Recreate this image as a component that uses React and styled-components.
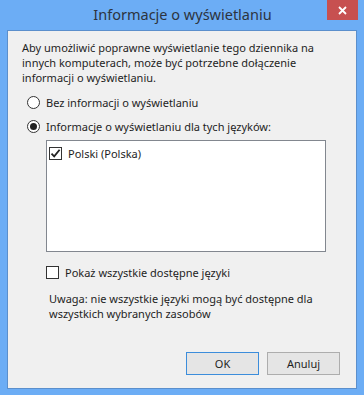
import styled, { createGlobalStyle } from "styled-components";

const GlobalStyle = createGlobalStyle`
  html, body {
    margin: 0;
    padding: 0;
    background: #6cadf5;
  }
  body {
    font-family: "Noto Sans", "Open Sans", sans-serif;
  }
`;

const CheckMark = () => (
  <svg width="11" height="11" viewBox="0 0 11 11">
    <path
      d="M1.5 5.6 L4.2 8.4 L9.6 1.8"
      fill="none"
      stroke="#222"
      strokeWidth="1.8"
    />
  </svg>
);

const App = () => {
  return (
    <>
      <GlobalStyle />
      <Window>
        <TitleBar>
          <span />
          <Title>Informacje o wyświetlaniu</Title>
          <CloseButton aria-label="Zamknij">
            <svg width="9" height="9" viewBox="0 0 9 9">
              <path d="M1 1 L8 8 M8 1 L1 8" stroke="#fff" strokeWidth="1.8" />
            </svg>
          </CloseButton>
        </TitleBar>

        <Client>
          <Intro>
            Aby umożliwić poprawne wyświetlanie tego dziennika na innych
            komputerach, może być potrzebne dołączenie informacji o
            wyświetlaniu.
          </Intro>

          <RadioRow $top={9}>
            <Radio />
            <Label>Bez informacji o wyświetlaniu</Label>
          </RadioRow>
          <RadioRow $top={7}>
            <Radio $checked />
            <Label>Informacje o wyświetlaniu dla tych języków:</Label>
          </RadioRow>

          <ListBox>
            <ListItem>
              <CheckBox>
                <CheckMark />
              </CheckBox>
              <Label>Polski (Polska)</Label>
            </ListItem>
          </ListBox>

          <CheckRow>
            <CheckBox />
            <Label>Pokaż wszystkie dostępne języki</Label>
          </CheckRow>

          <Note>
            Uwaga: nie wszystkie języki mogą być dostępne dla wszystkich
            wybranych zasobów
          </Note>

          <ButtonBar>
            <Button $default>OK</Button>
            <Button>Anuluj</Button>
          </ButtonBar>
        </Client>
      </Window>
    </>
  );
};

export default App;

const Window = styled.div`
  width: 364px;
  height: 395px;
  box-sizing: border-box;
  padding: 0 7px 6px 7px;
  display: flex;
  flex-direction: column;
  background: #6cadf5;
`;

const TitleBar = styled.div`
  height: 30px;
  flex-shrink: 0;
  display: grid;
  grid-template-columns: 1fr auto 1fr;
  margin-right: -1px;
`;

const Title = styled.div`
  font-size: 14.5px;
  color: #2d3440;
  line-height: 26px;
  padding-top: 1px;
`;

const CloseButton = styled.div`
  justify-self: end;
  width: 31px;
  height: 20px;
  background: #c75050;
  display: flex;
  align-items: center;
  justify-content: center;
`;

const Client = styled.div`
  flex: 1;
  background: #f0f0f0;
  border: 1px solid #5b8fcc;
  display: flex;
  flex-direction: column;
  padding: 9px 16px 13px 14px;
  font-size: 11px;
  color: #1e1e1e;
`;

const Intro = styled.p`
  margin: 0;
  line-height: 15px;
  width: 318px;
`;

const RadioRow = styled.div`
  display: flex;
  align-items: center;
  gap: 6px;
  height: 17px;
  margin-top: ${({ $top }) => $top}px;
  padding-left: 5px;
`;

const Radio = styled.span`
  width: 11px;
  height: 11px;
  border: 1px solid #333;
  border-radius: 50%;
  background: #fff;
  display: flex;
  align-items: center;
  justify-content: center;

  &::after {
    content: "";
    display: ${({ $checked }) => ($checked ? "block" : "none")};
    width: 7px;
    height: 7px;
    border-radius: 50%;
    background: #222;
  }
`;

const Label = styled.span`
  line-height: 17px;
  white-space: nowrap;
`;

const ListBox = styled.div`
  margin: 5px 0 0 24px;
  width: 280px;
  height: 112px;
  box-sizing: border-box;
  border: 1px solid #82878f;
  background: #fff;
  padding: 4px 2px;
`;

const ListItem = styled.div`
  display: flex;
  align-items: center;
  gap: 6px;
  height: 17px;
`;

const CheckBox = styled.span`
  width: 11px;
  height: 11px;
  border: 1px solid #333;
  background: #fff;
  display: flex;
  align-items: center;
  justify-content: center;
  flex-shrink: 0;
`;

const CheckRow = styled.div`
  display: flex;
  align-items: center;
  gap: 6px;
  height: 17px;
  margin: 12px 0 0 24px;
`;

const Note = styled.p`
  margin: 10px 0 0 27px;
  line-height: 15px;
  width: 290px;
`;

const ButtonBar = styled.div`
  margin-top: auto;
  display: flex;
  justify-content: flex-end;
  gap: 8px;
`;

const Button = styled.div`
  width: 73px;
  height: 23px;
  box-sizing: border-box;
  border: 1px solid ${({ $default }) => ($default ? "#3c8ddb" : "#adadad")};
  background: #e5e5e5;
  display: flex;
  align-items: center;
  justify-content: center;
  font-size: 11px;
  color: #1e1e1e;
`;
